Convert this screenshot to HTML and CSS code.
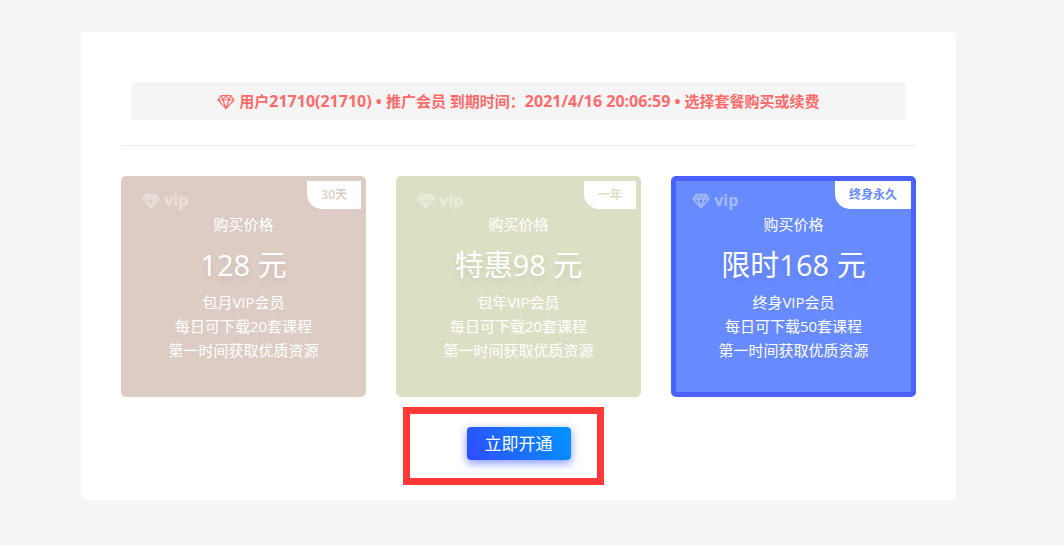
FILE: index.html
```html
<!doctype html>
<html lang="zh-CN">
<head>
    <meta charset="UTF-8">
    <meta name="viewport" content="width=device-width, initial-scale=1.0">
    <title>购买会员</title>
    <link rel="stylesheet" href="styles.css">
</head>
<body>
    <svg class="sprite" aria-hidden="true">
        <symbol id="diamond" viewBox="0 0 18 16">
            <path d="M4.2 1.5h9.6L17 6l-8 8.6L1 6z M1 6h16 M4.2 1.5L6 6l3 8.6L12 6l1.800-4.500 M6 6l3-4.500L12 6" />
        </symbol>
    </svg>

    <main class="page">
        <section class="panel">
            <p class="notice">
                <svg class="icon"><use href="#diamond"></use></svg>
                用户<span class="notice__num">21710(21710) • </span>推广会员 到期时间：<span class="notice__num">2021/4/16 20:06:59 • </span>选择套餐购买或续费
            </p>

            <div class="plans">
                <article class="plan plan--month">
                    <span class="plan__tag">30天</span>
                    <div class="plan__vip"><svg class="icon"><use href="#diamond"></use></svg> vip</div>
                    <p>购买价格</p>
                    <h2 class="plan__price">128 元</h2>
                    <p>包月VIP会员</p>
                    <p>每日可下载20套课程</p>
                    <p>第一时间获取优质资源</p>
                </article>
                <article class="plan plan--year">
                    <span class="plan__tag">一年</span>
                    <div class="plan__vip"><svg class="icon"><use href="#diamond"></use></svg> vip</div>
                    <p>购买价格</p>
                    <h2 class="plan__price">特惠98 元</h2>
                    <p>包年VIP会员</p>
                    <p>每日可下载20套课程</p>
                    <p>第一时间获取优质资源</p>
                </article>
                <article class="plan plan--life">
                    <span class="plan__tag">终身永久</span>
                    <div class="plan__vip"><svg class="icon"><use href="#diamond"></use></svg> vip</div>
                    <p>购买价格</p>
                    <h2 class="plan__price">限时168 元</h2>
                    <p>终身VIP会员</p>
                    <p>每日可下载50套课程</p>
                    <p>第一时间获取优质资源</p>
                </article>
            </div>

            <div class="action">
                <button type="button" class="buy">立即开通</button>
                <span class="marker"></span>
            </div>
        </section>
    </main>
</body>
</html>
```
FILE: styles.css
```css
html {
    background-color: #fff;
}

body {
    margin: 0;
    font-family: "Open Sans", "Noto Sans CJK SC", sans-serif;
    font-size: 15px;
    line-height: 24px;
}

p,
h2 {
    margin: 0;
}

.sprite {
    position: absolute;
    width: 0;
    height: 0;
}

.icon {
    width: 18px;
    height: 16px;
    fill: none;
    stroke: currentColor;
    stroke-width: 1.2;
    stroke-linejoin: round;
    vertical-align: -3px;
}

.page {
    padding: 32px 108px 45px 81px;
    background-color: #f5f5f5;
}

.panel {
    padding: 50px 40px 40px;
    border-radius: 5px;
    background-color: #fff;
}

.notice {
    margin: 0 10px;
    padding: 7px 10px;
    border-radius: 4px;
    background-color: #f5f5f5;
    color: #ff6b6b;
    font-weight: bold;
    text-align: center;
}

.notice__num {
    font-size: 16px;
    line-height: 1;
}

.plans {
    display: grid;
    grid-template-columns: repeat(3, 1fr);
    gap: 30px;
    margin-top: 25px;
    padding-top: 30px;
    border-top: 1px solid #ededed;
}

.plan {
    position: relative;
    padding: 7px 10px 30px;
    border: 5px solid;
    border-radius: 5px;
    text-align: center;
}

.plan p,
.plan__price {
    color: #fff;
}

.plan--month {
    border-color: #ddccc4;
    background-color: #ddccc4;
    color: #ddccc4;
}

.plan--year {
    border-color: #dcdfc4;
    background-color: #dcdfc4;
    color: #dcdfc4;
}

.plan--life {
    border-color: #4a60ff;
    background-color: #688aff;
    color: #688aff;
}

.plan__tag {
    position: absolute;
    top: 0;
    right: 0;
    padding: 0 14px;
    border-bottom-left-radius: 15px;
    background-color: #fff;
    font-size: 12px;
    font-weight: 600;
    line-height: 28px;
}

.plan__vip {
    padding-left: 6px;
    color: #fff;
    font-size: 16px;
    font-weight: bold;
    text-align: left;
    opacity: 0.4;
}

.plan__vip .icon {
    stroke-width: 1.6;
}

.plan__price {
    margin: 10px 0 6px;
    font-size: 29px;
    font-weight: normal;
    line-height: 38px;
    text-shadow: 0 4px 6px rgba(0, 0, 0, 0.08);
}

.action {
    position: relative;
    display: flex;
    justify-content: center;
    padding-top: 30px;
}

.buy {
    padding: 0 18px;
    border: 0;
    border-radius: 4px;
    background: linear-gradient(60deg, #2f4bff, #0396ff);
    box-shadow: 0 3px 10px rgba(47, 75, 255, 0.6);
    color: #fff;
    font-family: inherit;
    font-size: 17px;
    line-height: 33px;
}

/* red frame drawn over the button */
.marker {
    position: absolute;
    top: 10px;
    left: calc(50% - 116px);
    width: 187px;
    height: 64px;
    border: 7px solid #ff3838;
    pointer-events: none;
}
```
